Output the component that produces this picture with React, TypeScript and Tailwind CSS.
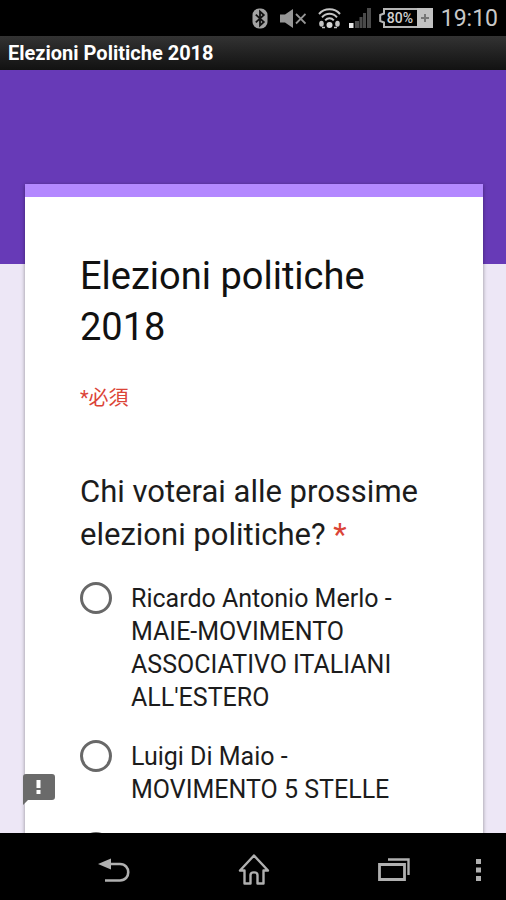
interface Candidate {
  id: string;
  label: string;
}

const candidates: Candidate[] = [
  {
    id: "merlo",
    label: "Ricardo Antonio Merlo - MAIE-MOVIMENTO ASSOCIATIVO ITALIANI ALL'ESTERO",
  },
  { id: "dimaio", label: "Luigi Di Maio - MOVIMENTO 5 STELLE" },
  { id: "next", label: "" },
];

function BluetoothIcon() {
  return (
    <svg className="w-4 h-[21px]" viewBox="0 0 16 21" fill="none">
      <rect x="0.5" y="0.5" width="15" height="20" rx="6.5" fill="#a3a3a3" />
      <path d="M3.8 6.6l8 7.4L8 17.4V3.6L11.8 7l-8 7.4" stroke="#111" strokeWidth="1.8" />
    </svg>
  );
}

function MutedIcon() {
  return (
    <svg className="w-[26px] h-[19px]" viewBox="0 0 26 19" fill="none">
      <path d="M0 5.5h5L13 0v19l-8-5.5H0z" fill="#969696" />
      <path d="M16 5l9.5 9.5M25.5 5L16 14.5" stroke="#969696" strokeWidth="1.8" />
    </svg>
  );
}

function WifiIcon() {
  return (
    <svg className="w-[23px] h-[21px]" viewBox="0 0 23 21" fill="none">
      <g stroke="#c4c4c4" strokeWidth="2">
        <path d="M1 6C6.5 -0.3 16.5 -0.3 22 6" />
        <path d="M4 9.3c4-4.6 11-4.6 15 0" />
        <path d="M7.2 12.3c2.4-2.7 6.2-2.7 8.6 0" />
      </g>
      <circle cx="11.5" cy="17" r="3" fill="#d6d6d6" />
      <ellipse cx="3.5" cy="15.8" rx="2.3" ry="3" fill="#c4c4c4" />
      <ellipse cx="19.5" cy="15.8" rx="2.3" ry="3" fill="#c4c4c4" />
      <path d="M4 19.5h3M16 19.5h3" stroke="#c4c4c4" strokeWidth="1.6" />
    </svg>
  );
}

function SignalIcon() {
  return (
    <svg className="w-[22px] h-5" viewBox="0 0 22 20">
      <rect x="0" y="15" width="4.5" height="5" fill="#e6e6e6" />
      <g fill="#4a4a4a">
        <rect x="6" y="13" width="4" height="7" />
        <rect x="10.5" y="9" width="3" height="11" />
        <rect x="14" y="5" width="3" height="15" />
        <rect x="18" y="0" width="4" height="20" />
      </g>
    </svg>
  );
}

function Battery() {
  return (
    <div className="relative w-[54px] h-5">
      <svg className="w-full h-full" viewBox="0 0 54 20" fill="none">
        <path d="M39 1H5v4.5L1.2 7v6L5 14.5V19h34" stroke="#b5b5b5" strokeWidth="2" />
        <rect x="38" width="16" height="20" fill="#c2c2c2" />
        <path d="M46 6v8M42 10h8" stroke="#777" strokeWidth="2" />
      </svg>
      <span className="absolute inset-y-0 left-2 flex items-center text-sm font-medium text-[#d0d0d0]">
        80%
      </span>
    </div>
  );
}

function StatusBar() {
  return (
    <div className="flex h-9 shrink-0 items-center justify-end bg-black pr-2">
      <div className="flex items-center gap-3">
        <BluetoothIcon />
        <MutedIcon />
        <WifiIcon />
      </div>
      <div className="ml-2 flex items-center gap-2">
        <SignalIcon />
        <Battery />
      </div>
      <time className="ml-2 pt-0.5 text-[23px] leading-9 text-[#c8c8c8]">19:10</time>
    </div>
  );
}

function CandidateOption({ id, label }: Candidate) {
  return (
    <div className="flex items-start gap-[19px]">
      <input
        type="radio"
        id={id}
        name="candidate"
        aria-labelledby={label ? undefined : "question"}
        className="size-8 shrink-0 appearance-none rounded-full border-3 border-[#686868] bg-white checked:border-[#673ab7] checked:bg-[#673ab7]"
      />
      <label htmlFor={id} className="text-[25px] leading-[33px] text-[#1c1c1c]">
        {label}
      </label>
    </div>
  );
}

function NavigationBar() {
  return (
    <nav className="grid h-[67px] shrink-0 grid-cols-[44px_repeat(3,1fr)_42px] items-center bg-black pt-1.5 text-[#b0b0b0]">
      <button type="button" aria-label="Indietro" className="col-start-2 justify-self-center">
        <svg className="w-8 h-6" viewBox="0 0 32 24" fill="none">
          <path d="M0 6l13-5.5v11z" fill="currentColor" />
          <path d="M12 6h10c11 0 11 16.500 0 16.500H7" stroke="currentColor" strokeWidth="2.6" />
        </svg>
      </button>
      <button type="button" aria-label="Home" className="justify-self-center">
        <svg className="w-8 h-[31px]" viewBox="0 0 32 31" fill="none">
          <path
            d="M16 1.500L2 16.500h4.500v13h6V21c0-3.500 7-3.500 7 0v8.500h6v-13H30z"
            stroke="currentColor"
            strokeWidth="2.4"
            strokeLinejoin="round"
          />
        </svg>
      </button>
      <button type="button" aria-label="App recenti" className="justify-self-center">
        <svg className="w-8 h-[23px]" viewBox="0 0 32 23" fill="none" stroke="currentColor">
          <path d="M1.500 6.500h25v15h-25z" strokeWidth="2.800" />
          <path d="M10 1.500h20.500V17" strokeWidth="2.400" />
        </svg>
      </button>
      <button type="button" aria-label="Menu" className="justify-self-start pl-3">
        <svg className="w-[5px] h-6" viewBox="0 0 5 24" fill="currentColor">
          <rect width="5" height="5" y="1" />
          <rect width="5" height="5" y="9.5" />
          <rect width="5" height="5" y="18" />
        </svg>
      </button>
    </nav>
  );
}

export default function App() {
  return (
    <div className="flex h-screen flex-col overflow-hidden font-[Roboto,'Noto_Sans_CJK_JP',sans-serif]">
      <StatusBar />
      <header className="h-[34px] shrink-0 bg-linear-to-b from-[#333] to-[#121212] px-2">
        <p className="text-xl leading-[34px] font-bold text-white">Elezioni Politiche 2018</p>
      </header>

      <div className="relative flex min-h-0 flex-1 flex-col">
        <main className="min-h-0 flex-1 overflow-hidden bg-[linear-gradient(#673ab7_194px,#ede7f6_194px)] pt-[114px] pr-[23px] pl-[25px]">
          <form className="border-t-13 border-[#b388ff] bg-white px-[55px] pt-[54px] pb-12 shadow-[0_1px_4px_rgba(0,0,0,0.4)]">
            <h1 className="text-[38px] leading-[51px] text-[#111]">Elezioni politiche 2018</h1>
            <p className="mt-[29px] text-xl leading-8 text-[#db4437]">*必須</p>
            <h2 id="question" className="mt-14 text-[31px] leading-[43px] text-[#1c1c1c]">
              Chi voterai alle prossime elezioni politiche?{" "}
              <span className="text-[#db4437]">*</span>
            </h2>
            <div role="radiogroup" aria-labelledby="question" className="mt-[26px] flex flex-col gap-[26px]">
              {candidates.map((c) => (
                <CandidateOption key={c.id} {...c} />
              ))}
            </div>
          </form>
        </main>

        <button
          type="button"
          aria-label="Segnala un problema"
          className="absolute bottom-7 left-[23px] text-[#6a6a6a]"
        >
          <svg className="w-8 h-8" viewBox="0 0 32 32">
            <path d="M3 1h26a3 3 0 0 1 3 3v20a3 3 0 0 1-3 3H5l-5 5V4a3 3 0 0 1 3-3z" fill="currentColor" />
            <path d="M13.5 7h4v8h-4zM13.5 17h4v4h-4z" fill="#fff" />
          </svg>
        </button>
      </div>

      <NavigationBar />
    </div>
  );
}
